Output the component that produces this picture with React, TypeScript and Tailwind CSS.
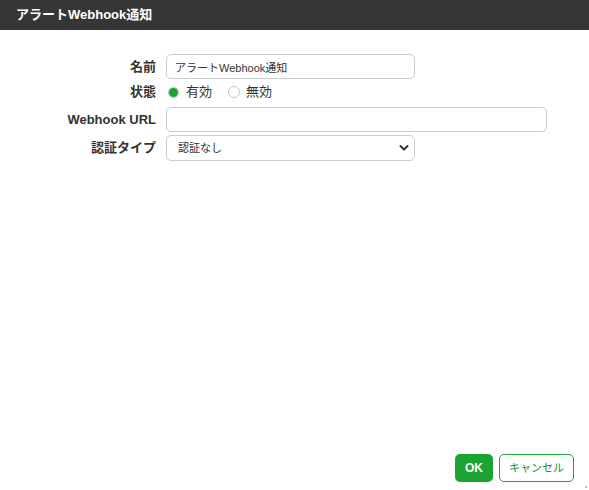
import React from "react";

const font = { fontFamily: '"Liberation Sans", "Noto Sans CJK JP", sans-serif' };

export default function App() {
  return (
    <div className="relative flex h-[490px] w-[589px] flex-col bg-white text-[#333]" style={font}>
      <div className="flex h-[30px] items-center bg-[#363636] pl-[16px]">
        <span className="text-[13px] font-bold text-white">アラートWebhook通知</span>
      </div>
      <div className="flex-1 pt-[24px]">
        <div className="grid grid-cols-[156px_1fr] grid-rows-[25px_22px_25px_26px] items-center gap-x-[10px] gap-y-[3px] pr-[42px]">
          <div className="text-right text-[13px] font-bold leading-[18px]">名前</div>
          <div className="h-[25px]">
            <input
              defaultValue="アラートWebhook通知"
              className="block h-[25px] w-[249px] rounded-[5px] border border-[#ccc] px-[8px] text-[11px] text-[#333] outline-none"
              style={font}
            />
          </div>
          <div className="pb-[2px] text-right text-[13px] font-bold leading-[18px]">状態</div>
          <div className="flex h-[22px] items-center pb-[2px] text-[13px] leading-[18px]">
            <span className="ml-[2px] flex h-[11px] w-[11px] items-center justify-center rounded-full border border-[#bbb] bg-white">
              <span className="h-[9px] w-[9px] rounded-full bg-[#1ba333]" />
            </span>
            <span className="ml-[7px]">有効</span>
            <span className="ml-[16px] h-[12px] w-[12px] rounded-full border border-[#c8c8c8] bg-white" />
            <span className="ml-[6px]">無効</span>
          </div>
          <div className="text-right text-[13px] font-bold leading-[18px]">Webhook URL</div>
          <div className="h-[25px]">
            <input
              className="block h-[25px] w-[381px] rounded-[5px] border border-[#ccc] px-[8px] text-[11px] outline-none"
              style={font}
            />
          </div>
          <div className="text-right text-[13px] font-bold leading-[18px]">認証タイプ</div>
          <div className="relative h-[26px] w-[249px]">
            <select
              className="block h-[26px] w-[249px] appearance-none rounded-[5px] border border-[#ccc] bg-white pl-[11px] text-[11px] text-[#333] outline-none"
              style={font}
              defaultValue="none"
            >
              <option value="none">認証なし</option>
            </select>
            <svg
              className="pointer-events-none absolute right-[6px] top-[9px]"
              width="10"
              height="8"
              viewBox="0 0 10 8"
            >
              <path d="M1.5 2 L5 5.5 L8.5 2" fill="none" stroke="#333" strokeWidth="2" strokeLinecap="round" strokeLinejoin="round" />
            </svg>
          </div>
        </div>
      </div>
      <div className="flex justify-end gap-[6px] pb-[8px] pr-[15px]">
        <button className="h-[28px] w-[38px] rounded-[5px] bg-[#1ba333] text-[12px] font-bold text-white" style={font}>
          OK
        </button>
        <button
          className="h-[28px] w-[75px] rounded-[5px] border border-[#1ba333] bg-white text-[11px] text-[#1a8f30]"
          style={font}
        >
          キャンセル
        </button>
      </div>
      <span className="absolute bottom-[2px] right-[2px] h-[2px] w-[2px] bg-[#bbb]" />
    </div>
  );
}
